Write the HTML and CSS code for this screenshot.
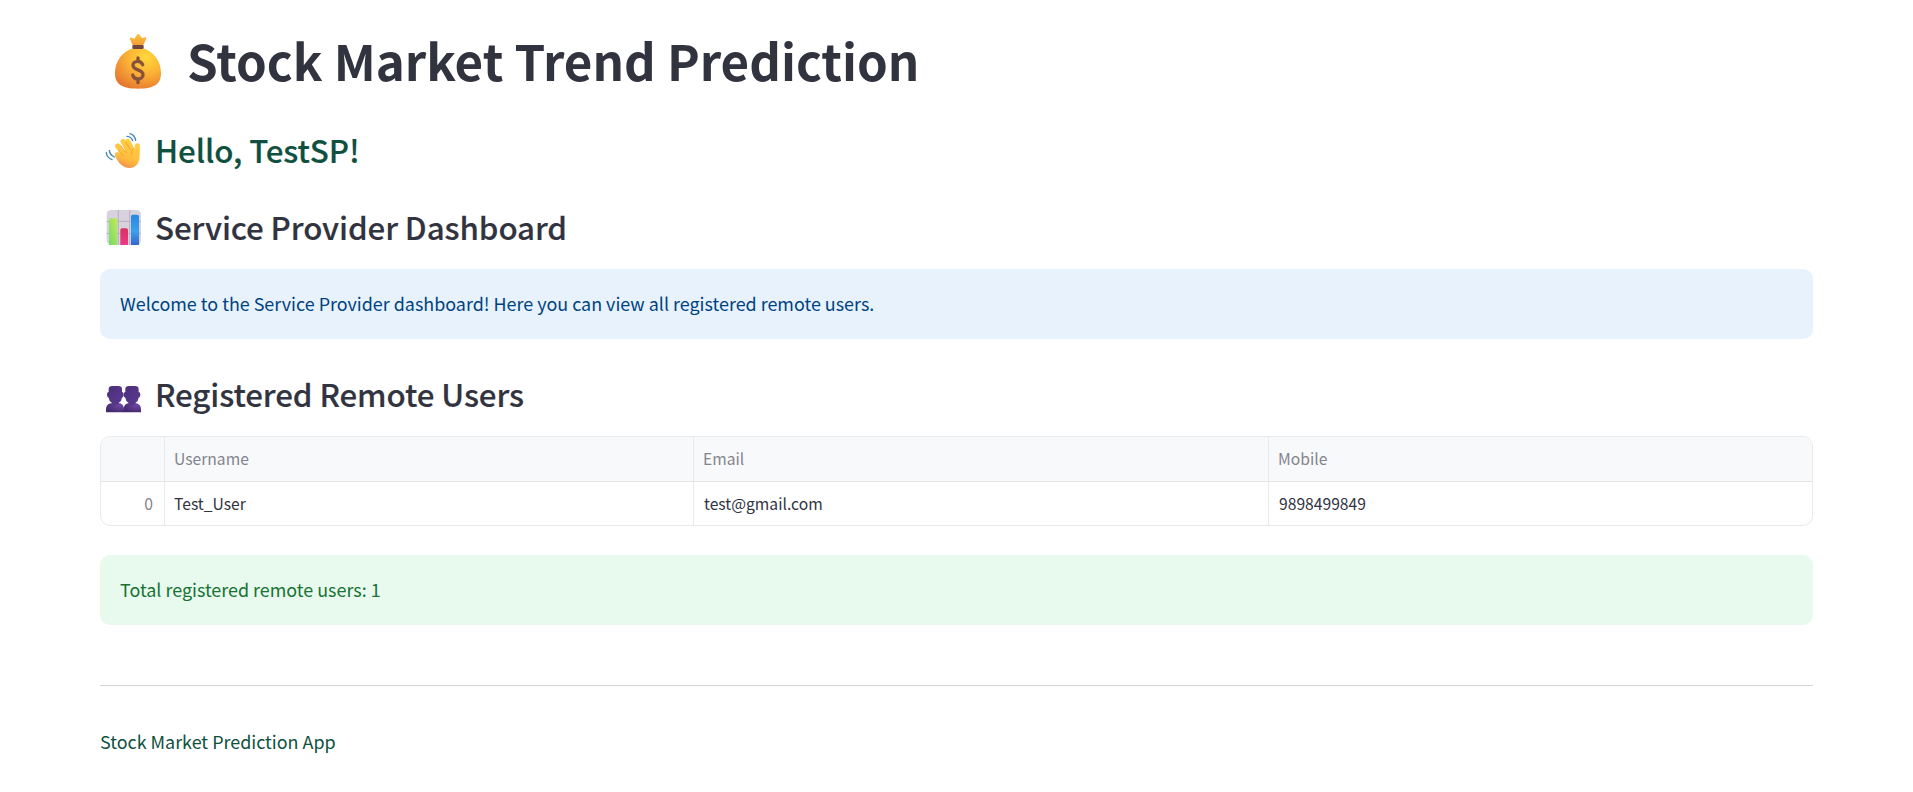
FILE: index.html
```html
<!DOCTYPE html>
<html lang="en">
<head>
<meta charset="utf-8">
<title>Stock Market Trend Prediction</title>
<link rel="stylesheet" href="styles.css">
</head>
<body>
<main class="page">
  <h1 class="title">
    <svg class="title-icon" viewBox="0 0 240 210" aria-hidden="true">
      <defs>
        <radialGradient id="bag" cx=".68" cy=".22" r=".85"><stop offset="0" stop-color="#ffd93c"/><stop offset=".5" stop-color="#fbb034"/><stop offset="1" stop-color="#e67832"/></radialGradient>
        <linearGradient id="tie" x2="0" y2="1"><stop offset="0" stop-color="#ffc340"/><stop offset="1" stop-color="#f49a30"/></linearGradient>
      </defs>
      <path d="M99 62 90 43q-2-6 5-5l8 3 8-12q4-4 8 0l8 11 8-3q6 0 3 6l-9 19z" fill="url(#tie)"/>
      <path d="M99 70C68 80 45 108 45 144c0 33 19 47 69 47s69-14 69-47c0-36-23-64-54-74z" fill="url(#bag)"/>
      <rect x="97" y="60" width="34" height="12" rx="4" fill="#70463f"/>
      <path d="M128 119c-3-7-8-10-15-10-8 0-14 5-14 12 0 17 30 10 30 28 0 8-7 13-15 13s-14-5-16-12M114 99v10M114 162v11" fill="none" stroke="#87513b" stroke-width="10" stroke-linecap="round"/>
    </svg>
    <span>Stock Market Trend Prediction</span>
  </h1>
  <h3 class="heading hello">
    <svg class="icon" viewBox="0 0 180 150" aria-hidden="true">
      <defs><linearGradient id="hand" gradientUnits="userSpaceOnUse" x1="115" y1="45" x2="85" y2="130"><stop offset="0" stop-color="#ffd044"/><stop offset=".65" stop-color="#ffbd3e"/><stop offset="1" stop-color="#f28a50"/></linearGradient></defs>
      <g fill="none" stroke="url(#hand)" stroke-width="15" stroke-linecap="round" stroke-linejoin="round">
        <path d="M67 89 84 106M68 63 90 94M84 49 102 82M99 49 112 76M127 62 124 90"/>
      </g>
      <path d="M78 82l32-17q7 8 10 9l14-10q1 14 0 32c-1 20-13 33-31 33-14 0-23-7-32-17L60 94z" fill="url(#hand)"/>
      <path d="M76 60l18 24M92 52l14 21M71 78l17 16M115 71q-8 8-5 18" fill="none" stroke="#e99d32" stroke-width="2.5" stroke-linecap="round"/>
      <path d="M96 34q13 1 17 13M105 26q14 4 17 20M43 76q1 13 15 20M34 82q1 16 17 22" fill="none" stroke="#3d84bd" stroke-width="4" stroke-linecap="round"/>
    </svg>
    <span>Hello, TestSP!</span>
  </h3>
  <h3 class="heading dashboard">
    <svg class="icon" viewBox="0 0 180 150" aria-hidden="true">
      <defs>
        <linearGradient id="green" x1="1" y1="0" x2="0" y2="1"><stop offset="0" stop-color="#c4e957"/><stop offset="1" stop-color="#72dc68"/></linearGradient>
        <linearGradient id="blue" x2="0" y2="1"><stop offset="0" stop-color="#2688df"/><stop offset=".55" stop-color="#3ba0ee"/><stop offset="1" stop-color="#3565c8"/></linearGradient>
        <linearGradient id="pink" x2="0" y2="1"><stop offset="0" stop-color="#d83261"/><stop offset="1" stop-color="#ee3a87"/></linearGradient>
      </defs>
      <rect x="35" y="15" width="103" height="105" rx="14" fill="#d8d1de"/>
      <path d="M70 15v105M104 15v105M35 49h103M35 85h103" stroke="#b9afc1" stroke-width="3"/>
      <path d="M42 120V45q0-5 5-5h15q5 0 5 5v75z" fill="url(#green)"/>
      <path d="M76 120V75q0-5 5-5h12q6 0 6 5v45z" fill="url(#pink)"/>
      <path d="M108 120V34q0-5 5-5h13q6 0 6 5v86z" fill="url(#blue)"/>
    </svg>
    <span>Service Provider Dashboard</span>
  </h3>
  <div class="alert info">Welcome to the Service Provider dashboard! Here you can view all registered remote users.</div>
  <h3 class="heading users">
    <svg class="icon" viewBox="0 0 180 150" aria-hidden="true">
      <defs>
        <radialGradient id="bust" cx=".75" cy=".25" r=".8"><stop offset="0" stop-color="#6c46a0"/><stop offset="1" stop-color="#462a70"/></radialGradient>
        <linearGradient id="head" x2="1" y2="1"><stop offset="0" stop-color="#4c2e79"/><stop offset="1" stop-color="#5c3b91"/></linearGradient>
      </defs>
      <path d="M33 127v-9q0-18 20-19h16q18 1 18 19v9z" fill="url(#bust)"/>
      <path d="M86 127v-9q0-18 18-19h14q20 1 20 19v9z" fill="url(#bust)"/>
      <g fill="url(#head)"><path id="person" d="M41 66V58q0-10 11-10h18q11 0 11 10v8q5 0 5 9 0 7-5 8-1 11-10 16v4q-10 6-20 0v-4q-9-5-10-16-5-1-5-8 0-9 5-9z"/><use href="#person" x="50"/></g>
    </svg>
    <span>Registered Remote Users</span>
  </h3>
  <div class="table">
    <div class="cell head"></div><div class="cell head">Username</div><div class="cell head">Email</div><div class="cell head">Mobile</div>
    <div class="cell index">0</div><div class="cell">Test_User</div><div class="cell">test@gmail.com</div><div class="cell">9898499849</div>
  </div>
  <div class="alert success">Total registered remote users: 1</div>
  <hr class="divider">
  <p class="footer">Stock Market Prediction App</p>
</main>
</body>
</html>
```
FILE: styles.css
```css
* { box-sizing: border-box; }
body {
  margin: 0;
  background: #fff;
  color: #31333f;
  font-family: "Noto Sans CJK SC", "Noto Sans", sans-serif;
  font-size: 17.91px;
}
.page { padding: 20px 100px 0; }
.title, .heading { display: flex; align-items: center; margin: 0; white-space: nowrap; }
.title { height: 80px; padding-bottom: 2px; font-size: 49.25px; font-weight: 700; }
.title-icon { width: 80px; height: 70px; margin: 7px 7px 5px 0; flex: none; }
.heading { height: 50px; font-size: 31.3px; font-weight: 500; letter-spacing: -0.1px; -webkit-text-stroke: 0.15px currentColor; }
.icon { width: 60px; height: 50px; margin-left: -5px; flex: none; }
.hello { height: 48px; margin-top: 25px; color: #0f5040; }
.hello .icon { margin-top: 2px; }
.dashboard { height: 48px; margin-top: 29px; }
.dashboard .icon { margin-top: 8px; }
.users { margin-top: 29px; }
.users .icon { margin-top: 4px; }
.alert { display: flex; align-items: center; height: 70px; padding: 0 20px 3px; border-radius: 10px; }
.info { margin-top: 19px; background: #e7f2fc; color: #004280; }
.success { margin-top: 29px; background: #e8f9ee; color: #177233; }
.table {
  display: grid;
  grid-template-columns: 64px 529px 575px 1fr;
  grid-template-rows: 45px 43px;
  margin-top: 18px;
  border: 1px solid #e8e9eb;
  border-radius: 10px;
  overflow: hidden;
  font-size: 15.67px;
}
.cell { display: flex; align-items: center; padding: 0 9px 1px 10px; border-right: 1px solid #e8e9eb; }
.cell:nth-child(4n) { border-right: 0; }
.cell:nth-child(4n + 2) { padding-left: 9px; }
.head { padding: 0 9px 2px; border-bottom: 1px solid #e3e5e8; background: #f8f9fb; color: #83858c; }
.index { justify-content: flex-end; padding-right: 11px; color: #83858c; }
.divider { height: 1px; margin: 60px 0 0; border: 0; background: #d6d6d9; }
.footer { margin: 40px 0 0; line-height: 30px; color: #0f5040; }
```
